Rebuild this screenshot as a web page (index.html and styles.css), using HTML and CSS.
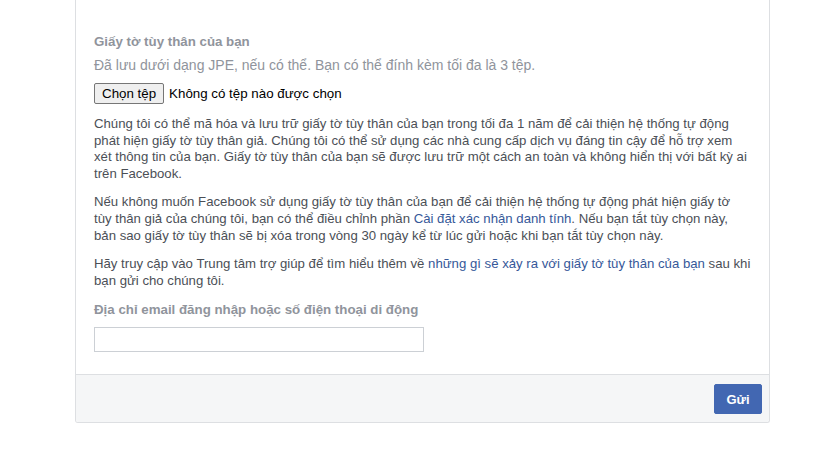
FILE: index.html
```html
<!DOCTYPE html>
<html lang="vi">
<head>
<meta charset="utf-8">
<title>Giấy tờ tùy thân</title>
<link rel="stylesheet" href="styles.css">
</head>
<body>
<div class="card">
  <div class="card-body">
    <div class="field-title">Giấy tờ tùy thân của bạn</div>
    <div class="field-desc">Đã lưu dưới dạng JPE, nếu có thể. Bạn có thể đính kèm tối đa là 3 tệp.</div>
    <div class="file-row">
      <button class="file-btn" type="button">Chọn tệp</button>
      <span class="file-status">Không có tệp nào được chọn</span>
    </div>
    <p class="para">Chúng tôi có thể mã hóa và lưu trữ giấy tờ tùy thân của bạn trong tối đa 1 năm để cải thiện hệ thống tự động<br>phát hiện giấy tờ tùy thân giả. Chúng tôi có thể sử dụng các nhà cung cấp dịch vụ đáng tin cậy để hỗ trợ xem<br>xét thông tin của bạn. Giấy tờ tùy thân của bạn sẽ được lưu trữ một cách an toàn và không hiển thị với bất kỳ ai<br>trên Facebook.</p>
    <p class="para">Nếu không muốn Facebook sử dụng giấy tờ tùy thân của bạn để cải thiện hệ thống tự động phát hiện giấy tờ<br>tùy thân giả của chúng tôi, bạn có thể điều chỉnh phần <a class="link" href="#">Cài đặt xác nhận danh tính</a>. Nếu bạn tắt tùy chọn này,<br>bản sao giấy tờ tùy thân sẽ bị xóa trong vòng 30 ngày kể từ lúc gửi hoặc khi bạn tắt tùy chọn này.</p>
    <p class="para">Hãy truy cập vào Trung tâm trợ giúp để tìm hiểu thêm về <a class="link" href="#">những gì sẽ xảy ra với giấy tờ tùy thân của bạn</a> sau khi<br>bạn gửi cho chúng tôi.</p>
    <div class="field-title label-email">Địa chỉ email đăng nhập hoặc số điện thoại di động</div>
    <input class="text-input" type="text">
  </div>
  <div class="card-footer">
    <button class="submit-btn" type="button">Gửi</button>
  </div>
</div>
</body>
</html>
```
FILE: styles.css
```css
html, body {
  margin: 0;
  padding: 0;
  background: #fff;
}
body {
  font-family: "Liberation Sans", Arial, sans-serif;
  font-size: 13.2px;
  color: #4b4f56;
}
.card {
  margin-left: 75px;
  width: 695px;
  box-sizing: border-box;
  border: 1px solid #dddfe2;
  border-top: 0;
  border-radius: 0 0 3px 3px;
  overflow: hidden;
}
.card-body {
  padding: 34px 14px 22px 18px;
}
.field-title {
  font-weight: bold;
  color: #90949c;
  font-size: 13.3px;
  line-height: 16px;
}
.field-desc {
  color: #90949c;
  font-size: 14px;
  line-height: 16px;
  margin-top: 7px;
}
.file-row {
  display: flex;
  align-items: center;
  margin-top: 10px;
  font-size: 13.333px;
  color: #000;
}
.file-btn {
  font-family: "Liberation Sans", Arial, sans-serif;
  font-size: 13.333px;
  color: #000;
  background: #efefef;
  border: 1px solid #767676;
  border-radius: 2px;
  height: 21px;
  padding: 0 7px;
  margin: 0 5px 0 0;
}
.para {
  margin: 12px 0 0;
  line-height: 16.6px;
}
.link {
  color: #365899;
  text-decoration: none;
}
.label-email {
  margin-top: 13px;
}
.text-input {
  display: block;
  margin-top: 9px;
  width: 330px;
  height: 25px;
  box-sizing: border-box;
  border: 1px solid #ccd0d5;
  padding: 3px;
  font-family: inherit;
  font-size: 12px;
}
.card-footer {
  background: #f5f6f7;
  border-top: 1px solid #dddfe2;
  padding: 9px 7px 8px;
  display: flex;
  justify-content: flex-end;
}
.submit-btn {
  background: #4267b2;
  border: 1px solid #4267b2;
  color: #fff;
  font-family: "Liberation Sans", Arial, sans-serif;
  font-weight: bold;
  font-size: 13px;
  height: 30px;
  width: 48px;
  padding: 0;
  border-radius: 2px;
}
```
